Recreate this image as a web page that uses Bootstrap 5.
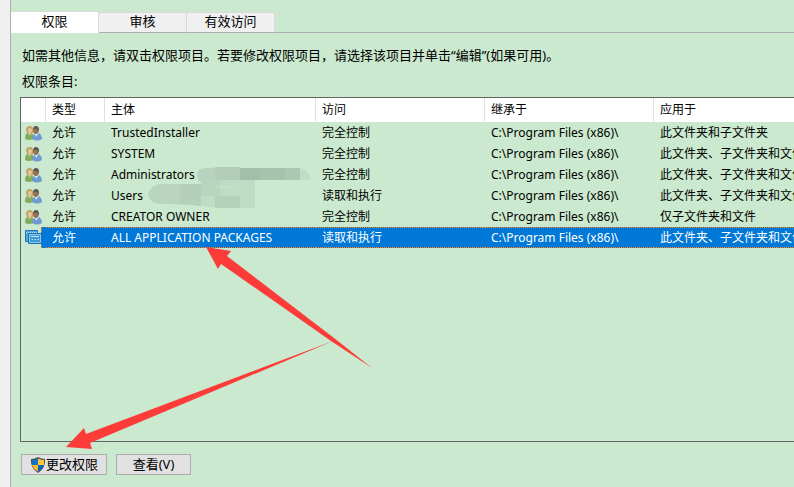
<!DOCTYPE html>
<html lang="zh-CN">
<head>
<meta charset="utf-8">
<meta name="viewport" content="width=device-width, initial-scale=1">
<title>高级安全设置</title>
<link href="https://cdn.jsdelivr.net/npm/bootstrap@5.3.0/dist/css/bootstrap.min.css" rel="stylesheet">
<style>
  :root { --face: #cbe9ce; --line: #aeaeae; --accent: #0078d7; }
  body { font-family: "Noto Sans", "Noto Sans CJK SC", sans-serif; font-size: 13px; line-height: 20px; color: #000; background: #f0f0f0; }
  .sheet { margin-left: 10px; border-left: 1px solid var(--line); background: var(--face); padding-top: 11px; }
  .strip { border-bottom: 1px solid var(--line); }
  .strip .nav-link { width: 88px; height: 21px; padding: 0; margin-bottom: -1px; line-height: 16px; color: #000; background: #f0f0f0; border: 1px solid #d9d9d9; border-left: 0; border-bottom-color: var(--line); border-radius: 0; }
  .strip .nav-link { padding-bottom: 3px; }
  .strip .nav-link.active { height: 22px; color: #000; background: #fff; border-bottom-color: #fff; }
  .pane { padding: 12px 0 12px 9px; }
  .pane p { padding-left: 2px; margin-bottom: 6px; white-space: nowrap; }
  .entries { border: 1px solid #646464; border-right: 0; min-height: 160px; }
  .grid { width: 873px; table-layout: fixed; border-collapse: separate; border-spacing: 0; font-size: 12px; line-height: 20px; }
  .grid th { height: 24px; padding: 0 6px; font-weight: 400; background: #fff; border-right: 1px solid #e0e0e0; }
  .grid td { height: 21px; padding: 0 6px; white-space: nowrap; }
  .grid td:first-child { padding: 0 0 0 4px; }
  .grid svg { display: block; }
  .grid .chosen td {
    color: #fff;
    background: repeating-linear-gradient(90deg, #ff8728 0 1px, #1c6cae 1px 2px) top / 100% 1px no-repeat,
                repeating-linear-gradient(90deg, #ff8728 0 1px, #1c6cae 1px 2px) bottom / 100% 1px no-repeat,
                var(--accent);
  }
  .grid .chosen td:first-child {
    background: repeating-linear-gradient(#ff8728 0 1px, #1c6cae 1px 2px) 20px 0 / 1px 100% no-repeat,
                linear-gradient(90deg, var(--face) 20px, var(--accent) 20px);
  }
  .action { --bs-btn-border-radius: 0; height: 21px; padding: 0; font-size: 13px; line-height: 19px; color: #000; background: #e1e1e1; border: 1px solid #adadad; }
  .action:hover { color: #000; background: #e5f1fb; border-color: var(--accent); }
  .actions { padding: 12px 0 0 1px; gap: 9px; }
  .wide { width: 86px; }
  .narrow { width: 75px; }
  .markup { pointer-events: none; }
</style>
<script src="https://cdn.jsdelivr.net/npm/bootstrap@5.3.0/dist/js/bootstrap.bundle.min.js"></script>
</head>
<body class="overflow-hidden">
<svg width="0" height="0" class="position-absolute" aria-hidden="true">
  <symbol id="people" viewBox="0 0 17 16">
    <path d="M1 5Q1 1 5 1Q8 1 8 5L8 8L2 8Z" fill="#bfa468"/>
    <path d="M4 3Q7 3 7 5Q7 8 5 8Q3 8 3 5Z" fill="#e6c69b"/>
    <path d="M0 14Q0 8 3 8L5 9L7 8L9 11L8 14Q4 16 0 14Z" fill="#82ad5e"/>
    <path d="M3 8L5 11L6 8Z" fill="#e1c396"/>
    <path d="M8 5Q8 1 11 1Q14 1 14 5L13 8L9 8Z" fill="#5a5755"/>
    <path d="M8 4L12 4L13 6L12 9L10 9Q8 8 8 4Z" fill="#9b7153"/>
    <path d="M7 14Q7 10 10 9L12 10L14 8Q17 10 17 14Q12 17 7 14Z" fill="#6f9bd2"/>
    <path d="M10 9L11 12L13 9Z" fill="#d8e7f4"/>
  </symbol>
  <symbol id="package" viewBox="0 0 17 15">
    <path d="M.5 11.500V.5H12.500V3M.5 11.500H3" fill="#59a6dc" stroke="#1c76b9"/>
    <path d="M1 1H12V4H4V11H1Z" fill="#59a6dc"/>
    <path d="M1 2.500H12" stroke="#b8def5" stroke-dasharray="1 1"/>
    <path d="M3.500 3.500H16.500V13.500H3.500Z" fill="#3d97d8" stroke="#1671b7"/>
    <path d="M4.500 4.500H15.500V12.500H4.500Z" fill="none" stroke="#8dc7ed"/>
    <path d="M6 6.500H14M6.500 9.500H8M9.500 9.500H11M12.500 9.500H14" fill="none" stroke="#c9e7f9"/>
  </symbol>
</svg>

<div class="position-relative">
<main class="sheet vh-100 d-flex flex-column overflow-hidden">
  <nav class="nav strip flex-nowrap align-items-end" role="tablist">
    <button class="nav-link active" type="button" role="tab" aria-selected="true">权限</button>
    <button class="nav-link" type="button" role="tab" aria-selected="false">审核</button>
    <button class="nav-link" type="button" role="tab" aria-selected="false">有效访问</button>
  </nav>
  <section class="pane flex-grow-1 d-flex flex-column">
    <p>如需其他信息，请双击权限项目。若要修改权限项目，请选择该项目并单击“编辑”(如果可用)。</p>
    <p id="list-title">权限条目:</p>
    <div class="entries flex-grow-1 overflow-hidden">
      <table class="grid" aria-labelledby="list-title">
        <colgroup><col style="width:25px"><col style="width:59px"><col style="width:211px"><col style="width:169px"><col style="width:169px"><col style="width:240px"></colgroup>
        <thead><tr><th></th><th>类型</th><th>主体</th><th>访问</th><th>继承于</th><th>应用于</th></tr></thead>
        <tbody>
          <tr><td><svg width="17" height="16"><use href="#people"/></svg></td><td>允许</td><td>TrustedInstaller</td><td>完全控制</td><td>C:\Program Files (x86)\</td><td>此文件夹和子文件夹</td></tr>
          <tr><td><svg width="17" height="16"><use href="#people"/></svg></td><td>允许</td><td>SYSTEM</td><td>完全控制</td><td>C:\Program Files (x86)\</td><td>此文件夹、子文件夹和文件</td></tr>
          <tr><td><svg width="17" height="16"><use href="#people"/></svg></td><td>允许</td><td>Administrators</td><td>完全控制</td><td>C:\Program Files (x86)\</td><td>此文件夹、子文件夹和文件</td></tr>
          <tr><td><svg width="17" height="16"><use href="#people"/></svg></td><td>允许</td><td>Users</td><td>读取和执行</td><td>C:\Program Files (x86)\</td><td>此文件夹、子文件夹和文件</td></tr>
          <tr><td><svg width="17" height="16"><use href="#people"/></svg></td><td>允许</td><td>CREATOR OWNER</td><td>完全控制</td><td>C:\Program Files (x86)\</td><td>仅子文件夹和文件</td></tr>
          <tr class="chosen" aria-selected="true"><td><svg width="17" height="15"><use href="#package"/></svg></td><td>允许</td><td>ALL APPLICATION PACKAGES</td><td>读取和执行</td><td>C:\Program Files (x86)\</td><td>此文件夹、子文件夹和文件</td></tr>
        </tbody>
      </table>
    </div>
    <div class="actions d-flex">
      <button class="btn action wide d-flex align-items-center justify-content-center" type="button">
        <svg width="16" height="16" viewBox="0 0 16 16" aria-hidden="true">
          <path d="M8 0Q11 2 15 2Q16 11 8 16Q0 11 1 2Q5 2 8 0Z" fill="#4b5358"/>
          <path d="M8 1.500V8H2V3Q5 3 8 1.500Z" fill="#1572c5"/>
          <path d="M8 1.500V8H14V3Q11 3 8 1.500Z" fill="#ffc83a"/>
          <path d="M2 8H8V14.500Q3 12 2 8Z" fill="#fbba2e"/>
          <path d="M14 8H8V14.500Q13 12 14 8Z" fill="#0866bb"/>
        </svg>
        <span>更改权限</span>
      </button>
      <button class="btn action narrow" type="button">查看(V)</button>
    </div>
  </section>
</main>
<svg class="markup position-absolute top-0 start-0" width="400" height="460" viewBox="0 0 400 460" aria-hidden="true">
  <g>
    <path d="M197 174Q198 169 205 168L240 167V184H205Q197 182 197 174Z" fill="#b7d2bd"/>
    <path d="M215 167H240V180H215Z" fill="#b2ceb9"/>
    <path d="M240 168H260V180H240Z" fill="#a1bfa9"/>
    <path d="M260 168H285V180H260Z" fill="#a6c3ae"/>
    <path d="M285 168H300V180H285Z" fill="#aac8b2"/>
    <path d="M300 168Q309 170 311 180H300Z" fill="#c0dec5"/>
    <path d="M148 195Q150 185 160 184H201V205L165 204Q150 205 148 195Z" fill="#bad5bf"/>
    <path d="M180 184H201V206L180 204Z" fill="#b4cfba"/>
    <path d="M201 180H255V208H220L201 206Z" fill="#bfddc4"/>
    <path d="M201 180H220V196H201Z" fill="#b8d5be"/>
    <path d="M215 196H240V208H215Z" fill="#b4d2ba"/>
    <path d="M215 187H235" stroke="#cbe5ce"/>
  </g>
  <path d="M206 247L231 251L227 256L334 338L372 368L331 341L221 264L218 269Z" fill="#fd3c39"/>
  <path d="M66 447L84 428L86 434L333 341L90 443L92 449Z" fill="#fd3c39"/>
</svg>
</div>
</body>
</html>
